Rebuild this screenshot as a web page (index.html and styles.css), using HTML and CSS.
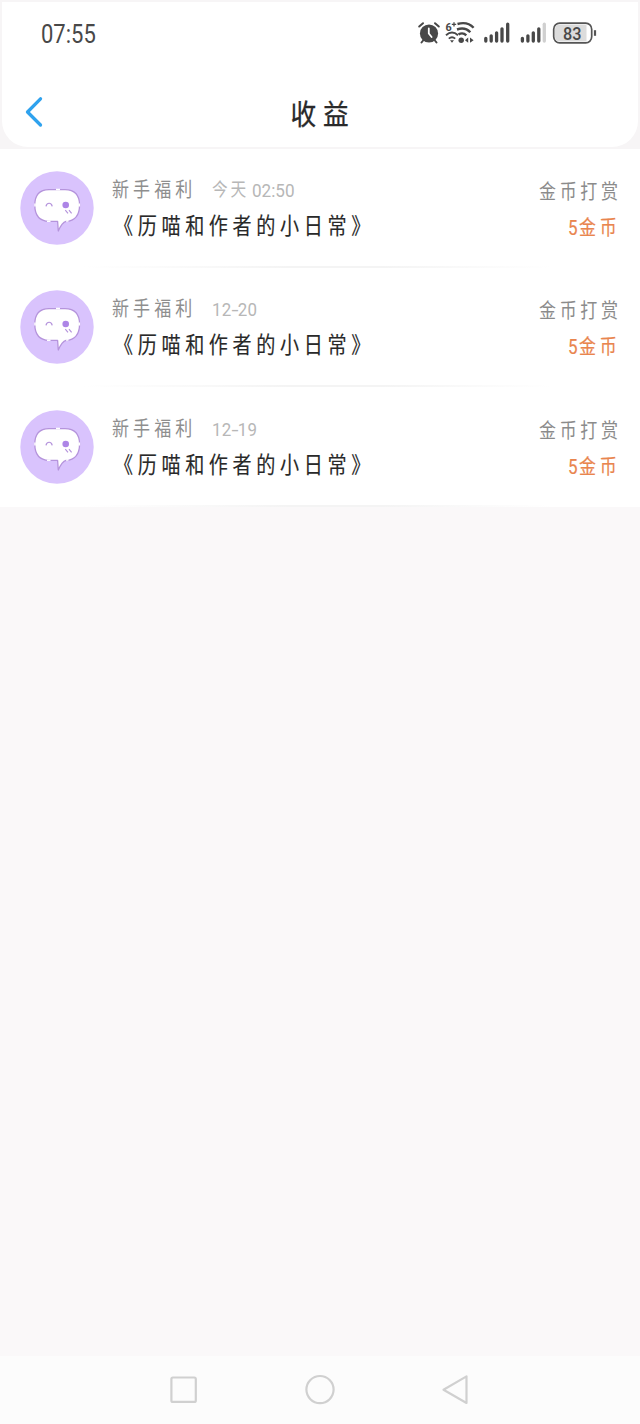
FILE: index.html
```html
<!DOCTYPE html>
<html lang="zh-CN">
<head>
<meta charset="utf-8">
<title>收益</title>
<link rel="stylesheet" href="styles.css">
</head>
<body>
<svg class="defs" width="0" height="0" aria-hidden="true">
  <symbol id="avatar" viewBox="0 0 74 74">
    <circle cx="37" cy="37" r="36.7" fill="#d9c3fd"/>
    <path d="M29 18.6H45Q59.4 18.8 59.6 34Q59.4 49.8 46 50.4Q42 51.5 38.3 60L37.6 50.4H29Q14.8 50 14.8 34Q14.8 18.8 29 18.6Z" fill="#fff" stroke="#b594dc" stroke-width="1.3" stroke-linejoin="round"/>
    <path d="M36 18.6H40M15 32.5V35.5M59.4 32.5V35.5M27 50.3H30.5M46.2 50.2L48.5 49.8" stroke="#fff" stroke-width="1.5"/>
    <path d="M26 35.3C26.6 31.2 31.6 31.2 32.2 35.3" fill="none" stroke="#b594dc" stroke-width="1.2"/>
    <circle cx="45.7" cy="34" r="3.3" fill="#ad85e6"/>
    <path d="M45.3 39.2L48 42.4M49 39.2L51.6 42.4" stroke="#b594dc" stroke-width="1.2"/>
  </symbol>
</svg>
<header class="top-wrap">
  <div class="top">
    <div class="status">
      <span class="clock">07:55</span>
      <svg class="status-icons" width="182" height="30" viewBox="0 0 182 30">
        <g fill="none" stroke="#484848" stroke-width="2" stroke-linecap="round">
          <circle cx="14" cy="15.5" r="9.1" fill="#484848" stroke="none"/>
          <path d="M4.2 8.5L8 5.2M23.8 8.5L20 5.2M8.5 22L6.5 24.5M19.5 22L21.5 24.5"/>
          <path d="M13.8 10.5V15.5L16.6 19" stroke="#fff" stroke-width="1.8"/>
          <path d="M42.5 6Q52.5 3.2 58.6 9.8M42 11.5Q50 8.6 55.3 14.3M43.5 16.4Q48 14 51.3 17.3" stroke-width="2.4" stroke-linecap="butt"/>
          <path d="M31 17.2Q37 12 43 17.2M33.8 20.6Q37 17.8 40.2 20.6" stroke-width="1.9" stroke-linecap="butt"/>
          <path d="M35 22.3H39L37 24.7Z" fill="#484848" stroke="none"/>
          <circle cx="46.2" cy="22.2" r="2.7" fill="#484848" stroke="none"/>
          <path d="M50 22.2L53.2 19.6V24.7ZM58.6 22.2L55 19.6V24.7Z" fill="#484848" stroke="none"/>
          <path d="M36.8 6.4H41.2M39 4.2V8.6" stroke-width="1.3" stroke-linecap="butt"/>
        </g>
        <text x="30.5" y="13" class="wifi-gen" textLength="6.2" lengthAdjust="spacingAndGlyphs">6</text>
        <g stroke="#484848" stroke-width="3.3" stroke-linecap="round">
          <path d="M70.8 20.3V23M76.2 17.8V23M81.6 14.8V23M87 10.8V23M92.7 6.2V23"/>
          <path d="M107.4 20.3V23M112.9 17.8V23M118.3 14.8V23M123.8 10.8V23"/>
          <path d="M129.3 6.2V23" stroke="#d0d0d0"/>
        </g>
        <rect x="138.7" y="5.2" width="38" height="19.6" rx="6" fill="#fff" stroke="#555" stroke-width="1.7"/>
        <path d="M145 6.5H171.5V23.5H145Q140 23.5 140 18.5V11.5Q140 6.5 145 6.5Z" fill="#dcdcdc"/>
        <path d="M180 12.2V17.8" stroke="#555" stroke-width="2.2"/>
        <text x="148" y="21.6" class="charge" textLength="18.5" lengthAdjust="spacingAndGlyphs">83</text>
      </svg>
    </div>
    <div class="bar">
      <svg class="back" width="18" height="32" viewBox="0 0 18 32"><path d="M15.5 2.8L2.5 16L15.5 29" fill="none" stroke="#2fa2ee" stroke-width="3.3" stroke-linecap="round" stroke-linejoin="round"/></svg>
      <h1 class="title"><span class="title-text">收益</span></h1>
    </div>
  </div>
</header>
<main class="list">
  <article class="row">
    <svg class="avatar"><use href="#avatar"/></svg>
    <div class="info">
      <div class="meta"><span class="kind">新手福利</span><span class="day">今天</span><span class="time">02:50</span></div>
      <div class="book">《历喵和作者的小日常》</div>
    </div>
    <div class="reward"><div class="source">金币打赏</div><div class="amount"><span class="num">5</span><span class="unit">金币</span></div></div>
  </article>
  <article class="row">
    <svg class="avatar"><use href="#avatar"/></svg>
    <div class="info">
      <div class="meta"><span class="kind">新手福利</span><span class="date">12<span class="dash">-</span>20</span></div>
      <div class="book">《历喵和作者的小日常》</div>
    </div>
    <div class="reward"><div class="source">金币打赏</div><div class="amount"><span class="num">5</span><span class="unit">金币</span></div></div>
  </article>
  <article class="row">
    <svg class="avatar"><use href="#avatar"/></svg>
    <div class="info">
      <div class="meta"><span class="kind">新手福利</span><span class="date">12<span class="dash">-</span>19</span></div>
      <div class="book">《历喵和作者的小日常》</div>
    </div>
    <div class="reward"><div class="source">金币打赏</div><div class="amount"><span class="num">5</span><span class="unit">金币</span></div></div>
  </article>
</main>
<nav class="nav">
  <svg width="300" height="34" viewBox="0 0 300 34" fill="none" stroke="#d0d0d0" stroke-width="2.2" stroke-linejoin="round">
    <rect x="1.4" y="4.5" width="24.4" height="24.4" rx="1.5"/>
    <circle cx="150" cy="16.6" r="13.6"/>
    <path d="M273.5 16.7L296.5 3.4V30Z"/>
  </svg>
</nav>
</body>
</html>
```
FILE: styles.css
```css
* { box-sizing: border-box; }
body {
  margin: 0;
  width: 640px;
  height: 1424px;
  display: flex;
  flex-direction: column;
  background: #faf8f9;
  font-family: Roboto, "Noto Sans CJK SC", sans-serif;
  color: #292929;
}
.defs { position: absolute; }
.top-wrap { flex: none; padding: 2px 2px 2px; background: #f7f5f6; }
.top {
  height: 145px;
  background: #fff;
  border-radius: 0 0 26px 26px;
}
.status {
  height: 66px;
  padding: 0 41px 0 39px;
  display: flex;
  align-items: center;
  justify-content: space-between;
}
.clock {
  width: 56px;
  font-size: 25px;
  line-height: 30px;
  color: #484848;
  white-space: nowrap;
  transform: scaleX(.88);
  transform-origin: left;
}
.status-icons { display: block; margin-top: -4px; }
.wifi-gen { font: 700 11.5px Roboto, sans-serif; fill: #484848; }
.charge { font: 500 18px Roboto, sans-serif; fill: #484848; }
.bar {
  height: 76px;
  padding: 0 22px 0 23px;
  display: grid;
  grid-template-columns: 18px 1fr 18px;
  align-items: center;
}
.back { margin-top: 12px; }
.title {
  margin: 19px 0 0;
  padding-left: 5px;
  text-align: center;
  font-weight: 400;
  font-size: 28.5px;
  line-height: 36px;
  -webkit-text-stroke: .3px #292929;
}
.title-text {
  display: inline-block;
  letter-spacing: 7.5px;
  transform: scaleX(.9);
}
.list { flex: none; height: 358px; background: #fff; }
.row {
  height: 119.4px;
  padding: 22px 20px 0;
  display: flex;
  background: linear-gradient(90deg, transparent 13%, #f4f4f4 45%, #f4f4f4 60%, transparent 86%) 0 117px / 100% 2px no-repeat;
}
.avatar { width: 74px; height: 74px; flex: none; }
.info { margin-left: 18px; padding-top: 1px; flex: 1; min-width: 0; }
.meta {
  height: 36px;
  display: flex;
  font-size: 20px;
  line-height: 37px;
  white-space: nowrap;
  color: #b7b7b7;
}
.meta span, .book, .source, .num, .unit { transform-origin: left; }
.kind {
  width: 100px;
  color: #8e8e8e;
  letter-spacing: 4.8px;
  transform: scaleX(.85);
}
.day {
  width: 40px;
  font-size: 18.5px;
  letter-spacing: 3.3px;
  transform: scaleX(.85);
}
.time { font-size: 19px; transform: scaleX(.9); }
.date { font-size: 19px; letter-spacing: .3px; transform: scaleX(.89); }
.dash {
  display: inline-block;
  width: 7px;
  transform: scaleX(1.5);
}
.book {
  width: 310px;
  margin-left: 1.5px;
  font-size: 22.5px;
  line-height: 37px;
  letter-spacing: 5.4px;
  white-space: nowrap;
  -webkit-text-stroke: .15px #292929;
  transform: scaleX(.85);
}
.reward { width: 81px; padding-top: 3px; flex: none; white-space: nowrap; }
.source {
  font-size: 20px;
  line-height: 36px;
  color: #8b8b8b;
  letter-spacing: 4.3px;
  transform: scaleX(.85);
}
.amount {
  padding-left: 29px;
  display: flex;
  font-size: 20px;
  line-height: 36px;
  color: #e9854e;
  -webkit-text-stroke: .2px #e9854e;
}
.num { width: 14px; transform: scaleX(.85); }
.unit { letter-spacing: 4.3px; transform: scaleX(.85); }
.nav {
  height: 68px;
  margin-top: auto;
  flex: none;
  display: flex;
  align-items: center;
  justify-content: center;
  background: #fcfcfc;
}
```
